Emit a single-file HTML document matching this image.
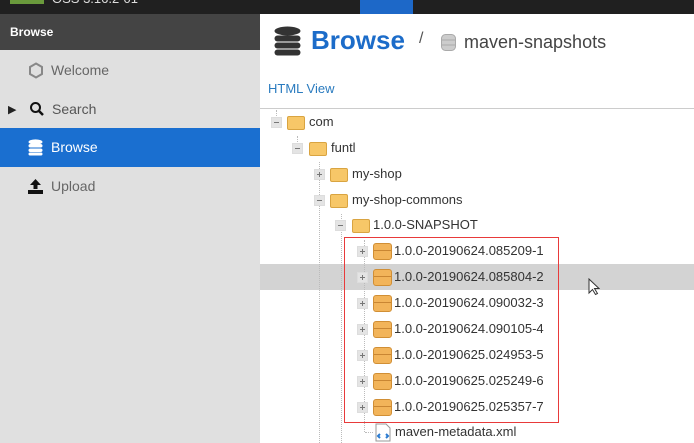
<!DOCTYPE html><html><head><style>
body{margin:0;width:694px;height:443px;overflow:hidden;font-family:"Liberation Sans",sans-serif;background:#fff;position:relative}
.a{position:absolute}
.row{position:absolute;font-size:13px;color:#333;white-space:nowrap;line-height:16px}
.pm{position:absolute;width:9px;height:9px;background:#e4e4e4;border:1px solid #ddd}
.pm:before{content:"";position:absolute;left:2px;top:4px;width:5px;height:1px;background:#777}
.pm.p:after{content:"";position:absolute;left:4px;top:2px;width:1px;height:5px;background:#777}
.fd{position:absolute;width:16px;height:12px;background:#f7c768;border:1px solid #d9a441;border-radius:2px}
.bx{position:absolute;width:17px;height:15px;background:#f2b45a;border:1px solid #d18f35;border-radius:3px}
.bx:after{content:"";position:absolute;left:0;right:0;top:6px;height:1px;background:#c98633}
.vl{position:absolute;border-left:1px dotted #bbb}
.hl{position:absolute;border-top:1px dotted #bbb;height:0}
</style></head><body>
<div class="a" style="left:0;top:0;width:694px;height:14px;background:#202020"></div>
<div class="a" style="left:10px;top:0;width:34px;height:4px;background:#6a9a3c"></div>
<div class="a" style="left:52px;top:-9px;color:#ddd;font-size:13px">OSS 3.16.2-01</div>
<div class="a" style="left:360px;top:0;width:53px;height:14px;background:#1d68c8"></div>
<div class="a" style="left:0;top:14px;width:260px;height:429px;background:#e0e0e0"></div>
<div class="a" style="left:0;top:14px;width:260px;height:36px;background:#444"></div>
<div class="a" style="left:10px;top:25px;color:#fff;font-weight:bold;font-size:12px">Browse</div>
<svg class="a" style="left:28px;top:62px" width="16" height="17"><path d="M8 1.5l6 3.5v7l-6 3.5-6-3.5v-7z" fill="none" stroke="#888" stroke-width="2"/></svg>
<div class="a" style="left:51px;top:62px;font-size:14px;color:#666">Welcome</div>
<div class="a" style="left:8px;top:103px;font-size:11px;color:#222">▶</div>
<svg class="a" style="left:29px;top:101px" width="16" height="16"><circle cx="6.5" cy="6.5" r="4.5" stroke="#111" stroke-width="2" fill="none"/><path d="M10 10l4 4" stroke="#111" stroke-width="2.5"/></svg>
<div class="a" style="left:52px;top:101px;font-size:14px;color:#555">Search</div>
<div class="a" style="left:0;top:128px;width:260px;height:39px;background:#1a6fd0"></div>
<svg class="a" style="left:28px;top:139px" width="15" height="17"><g fill="#fff"><ellipse cx="7.5" cy="3" rx="7" ry="2.6"/><rect x=".5" y="5" width="14" height="3.5" rx="2"/><rect x=".5" y="9.5" width="14" height="3.5" rx="2"/><rect x=".5" y="13.5" width="14" height="3" rx="1.5"/></g></svg>
<div class="a" style="left:51px;top:139px;font-size:14px;color:#fff">Browse</div>
<svg class="a" style="left:28px;top:178px" width="15" height="16"><path d="M7.5 1L2 7h3.5v4h4V7H13z M0 12h15v4H0z" fill="#111"/></svg>
<div class="a" style="left:51px;top:178px;font-size:14px;color:#666">Upload</div>
<svg class="a" style="left:274px;top:26px" width="27" height="30"><g fill="#333"><ellipse cx="13.5" cy="5" rx="13" ry="4.5"/><rect x=".5" y="9.5" width="26" height="6" rx="3"/><rect x=".5" y="16.5" width="26" height="6" rx="3"/><rect x=".5" y="23.5" width="26" height="6" rx="3"/></g></svg>
<div class="a" style="left:311px;top:25px;font-size:26px;font-weight:bold;color:#1c6cc9">Browse</div>
<div class="a" style="left:419px;top:30px;font-size:16px;color:#555">/</div>
<svg class="a" style="left:441px;top:34px" width="15" height="17"><rect x=".5" y=".5" width="14" height="16" rx="4" fill="#ccc" stroke="#aaa"/><path d="M1 6h13M1 11h13" stroke="#aaa"/></svg>
<div class="a" style="left:464px;top:32px;font-size:18px;color:#444">maven-snapshots</div>
<div class="a" style="left:268px;top:81px;font-size:13px;color:#2a7bbf">HTML View</div>
<div class="a" style="left:260px;top:108px;width:434px;height:1px;background:#ccc"></div>
<div class="a" style="left:260px;top:264px;width:434px;height:26px;background:#d3d3d3"></div>
<div class="vl" style="left:276px;top:110px;height:12px"></div>
<div class="vl" style="left:297px;top:136px;height:12px"></div>
<div class="vl" style="left:319px;top:162px;height:281px"></div>
<div class="vl" style="left:341px;top:214px;height:229px"></div>
<div class="vl" style="left:364px;top:240px;height:192px"></div>
<div class="pm" style="left:271px;top:117px"></div><div class="fd" style="left:287px;top:116px"></div><div class="row" style="left:309px;top:114px">com</div>
<div class="pm" style="left:292px;top:143px"></div><div class="fd" style="left:309px;top:142px"></div><div class="row" style="left:331px;top:140px">funtl</div>
<div class="pm p" style="left:314px;top:169px"></div><div class="fd" style="left:330px;top:168px"></div><div class="row" style="left:352px;top:166px">my-shop</div>
<div class="pm" style="left:314px;top:195px"></div><div class="fd" style="left:330px;top:194px"></div><div class="row" style="left:352px;top:192px">my-shop-commons</div>
<div class="pm" style="left:335px;top:220px"></div><div class="fd" style="left:352px;top:219px"></div><div class="row" style="left:373px;top:217px">1.0.0-SNAPSHOT</div>
<div class="pm p" style="left:357px;top:246px"></div><div class="bx" style="left:373px;top:243px"></div><div class="row" style="left:394px;top:243px">1.0.0-20190624.085209-1</div>
<div class="pm p" style="left:357px;top:272px"></div><div class="bx" style="left:373px;top:269px"></div><div class="row" style="left:394px;top:269px">1.0.0-20190624.085804-2</div>
<div class="pm p" style="left:357px;top:298px"></div><div class="bx" style="left:373px;top:295px"></div><div class="row" style="left:394px;top:295px">1.0.0-20190624.090032-3</div>
<div class="pm p" style="left:357px;top:324px"></div><div class="bx" style="left:373px;top:321px"></div><div class="row" style="left:394px;top:321px">1.0.0-20190624.090105-4</div>
<div class="pm p" style="left:357px;top:350px"></div><div class="bx" style="left:373px;top:347px"></div><div class="row" style="left:394px;top:347px">1.0.0-20190625.024953-5</div>
<div class="pm p" style="left:357px;top:376px"></div><div class="bx" style="left:373px;top:373px"></div><div class="row" style="left:394px;top:373px">1.0.0-20190625.025249-6</div>
<div class="pm p" style="left:357px;top:402px"></div><div class="bx" style="left:373px;top:399px"></div><div class="row" style="left:394px;top:399px">1.0.0-20190625.025357-7</div>
<div class="hl" style="left:365px;top:432px;width:8px"></div>
<svg class="a" style="left:375px;top:423px" width="16" height="19"><path d="M1 1h10l4 4v13H1z" fill="#fff" stroke="#999"/><path d="M5 11l-2 2 2 2M11 11l2 2-2 2" stroke="#2b7bd1" stroke-width="2" fill="none"/></svg>
<div class="row" style="left:395px;top:424px">maven-metadata.xml</div>
<div class="a" style="left:344px;top:237px;width:213px;height:184px;border:1px solid #e83a3a"></div>
<svg class="a" style="left:588px;top:278px" width="12" height="18"><path d="M1 1v14l3.5-3.5 3 5 2-1-3-5h4.5z" fill="#fff" stroke="#333"/></svg>
</body></html>
